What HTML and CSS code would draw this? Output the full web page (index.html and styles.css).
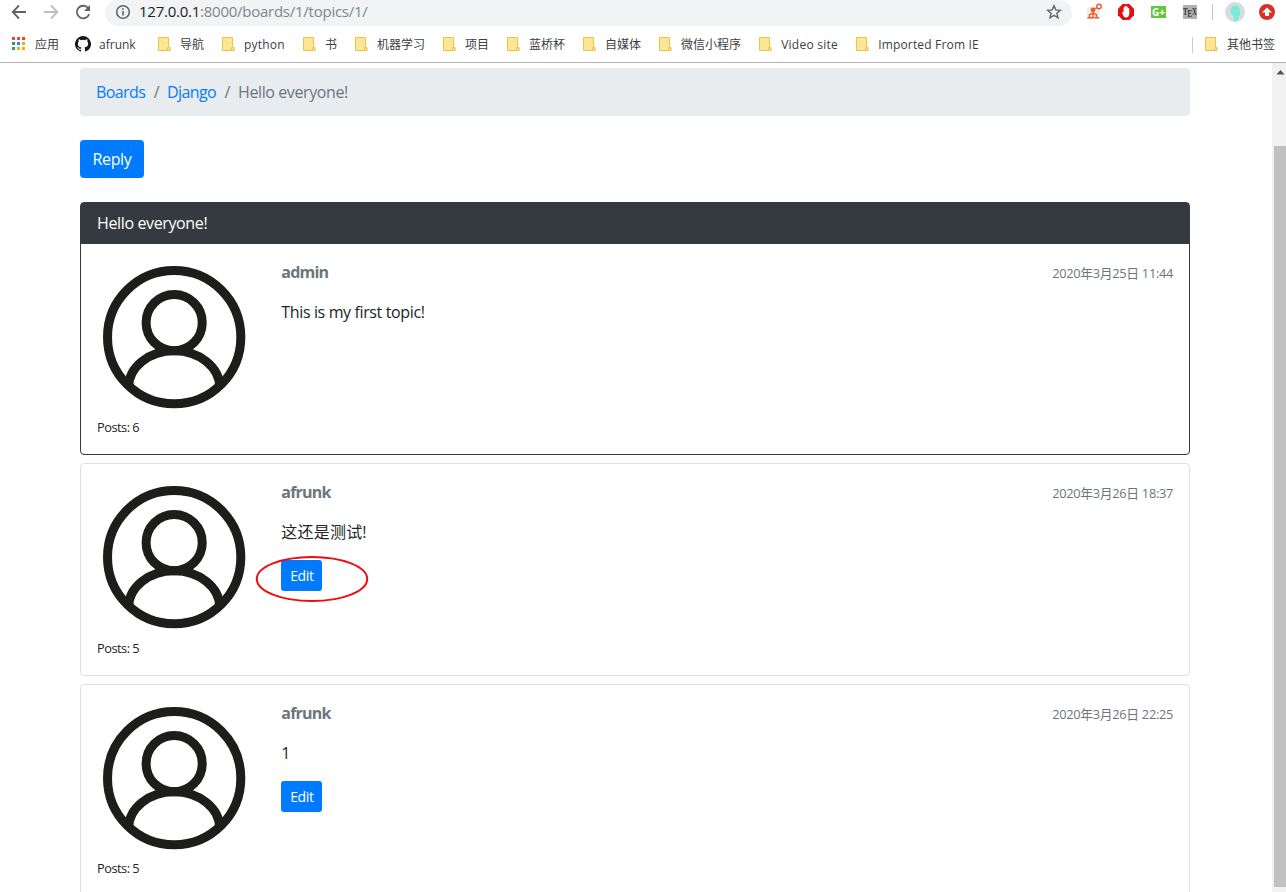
FILE: index.html
```html
<!DOCTYPE html>
<html lang="zh-CN">
<head>
<meta charset="utf-8">
<title>Hello everyone!</title>
<link rel="stylesheet" href="styles.css">
</head>
<body>
<svg class="defs" width="0" height="0">
  <symbol id="folder" viewBox="0 0 13 15">
    <path d="M.5.5h10v10h1.500v3h-11.500z" fill="#ffe694" stroke="#e8c44c"/>
    <path d="M9.500 13.500v-3q1.200-1.200 2.400 0v2q0 1-1 1z" fill="#ffe694" stroke="#e8c44c"/>
  </symbol>
  <symbol id="avatar" viewBox="0 0 154 154">
    <g fill="none" stroke="#1d1d1b" stroke-width="9">
      <circle cx="77" cy="77" r="66.500"/>
      <circle cx="77" cy="62.500" r="28"/>
      <path d="M31.500 127A45.500 36.500 0 0 1 122.500 127"/>
    </g>
  </symbol>
</svg>
<header class="browser">
  <div class="toolbar">
    <svg class="nav" width="100" height="26" viewBox="0 0 100 26" fill="none" stroke="#5f6368" stroke-width="1.800">
      <path d="M26 12H13.200M19 5.500L12.700 12l6.300 6.500"/>
      <path d="M44 12h12.800M51 5.500l6.300 6.500-6.300 6.500" stroke="#bcbec0"/>
      <path d="M88.200 8.200A6.300 6.300 0 1 0 89.200 14"/>
      <path d="M90 5v6h-6z" fill="#5f6368" stroke="none"/>
    </svg>
    <div class="omnibox">
      <svg width="16" height="16" viewBox="0 0 16 16" fill="none" stroke="#5f6368" stroke-width="1.600"><circle cx="8" cy="8" r="6.300"/><path d="M8 7v4.500M8 4.200v1.600"/></svg>
      <span class="url"><b>127.0.0.1</b>:8000/boards/1/topics/1/</span>
      <svg class="star" width="16" height="16" viewBox="0 0 16 16" fill="none" stroke="#5f6368" stroke-width="1.400"><path d="M8 1.700l1.800 4.200 4.600.4-3.500 3 1.100 4.500-4-2.400-4 2.400 1.100-4.500-3.500-3 4.600-.4z"/></svg>
    </div>
    <svg class="extensions" width="214" height="26" viewBox="1072 0 214 26">
      <rect x="1087" y="7" width="13" height="12" fill="#eeeeee"/>
      <g fill="none" stroke="#f4592f" stroke-width="1.400">
        <circle cx="1099" cy="6.500" r="2.300"/>
        <circle cx="1093" cy="10" r="1.700" fill="#f4592f"/>
        <path d="M1093 11v6M1089.500 17v-2.500q3.500-2 7 0V17M1087.500 17.700h4M1095 17.700h4M1091.500 17.700h3M1094.500 9l2.500-1.500"/>
      </g>
      <path d="M1122.700 4h6.600l4.700 4.700v6.600l-4.700 4.700h-6.600l-4.700-4.700V8.700z" fill="#e50d14"/>
      <path d="M1122 12l1.500.5V7.500q.8-1 1.300 0V6q.8-1 1.500 0v1q.8-1 1.500 0v1.500q.8-1 1.500 0V14q-.5 3.500-3.500 3.500-2.500 0-3.800-5.500" fill="#fff"/>
      <rect x="1151" y="6" width="15" height="12" fill="#60c93b"/>
      <text class="gplus" x="1152" y="15.500" textLength="13" lengthAdjust="spacingAndGlyphs">G+</text>
      <rect x="1183" y="5" width="14" height="14" fill="#b0b0b0"/>
      <text class="tex" x="1183" y="15" textLength="14" lengthAdjust="spacingAndGlyphs">T<tspan dy="1.500">E</tspan><tspan dy="-1.500">X</tspan></text>
      <path d="M1212.500 4v16" stroke="#c6c8ca"/>
      <circle cx="1235" cy="12" r="10" fill="#d9dcdd"/>
      <path d="M1230.500 11q0-5.500 4.700-5.500t4.800 5v3.500q0 2-1.500 2.500v3q-1 2-4 2l-1-1 .5-4.500q-3.500-1-3.500-5" fill="#79ebdc"/>
      <circle cx="1267" cy="12" r="8" fill="#d93025"/>
      <path d="M1267 7.500l5 5h-3v3.500h-4v-3.500h-3z" fill="#fff"/>
    </svg>
  </div>
  <nav class="bookmarks">
    <a class="apps"><svg width="13" height="13" viewBox="0 0 13 13"><path d="M0 0h3v3H0zM5 0h3v3H5zM10 0h3v3h-3z" fill="#ea4335"/><path d="M0 5h3v3H0zM0 10h3v3H0z" fill="#34a060"/><path d="M5 5h3v3H5z" fill="#2684fc"/><path d="M10 5h3v3h-3zM5 10h3v3H5zM10 10h3v3h-3z" fill="#fbab0b"/></svg><span>应用</span></a>
    <a class="github"><svg width="16" height="16" viewBox="0 0 16 16"><path d="M8 0a8 8 0 0 0-2.530 15.590c.4.070.55-.17.55-.38v-1.490c-2.230.49-2.690-.95-2.690-.95-.36-.92-.89-1.170-.89-1.170-.73-.5.050-.49.050-.49.810.06 1.230.83 1.230.83.710 1.230 1.870.87 2.330.67.070-.52.280-.87.500-1.070-1.770-.2-3.640-.89-3.640-3.950 0-.87.310-1.590.82-2.150-.08-.2-.36-1.010.08-2.120 0 0 .67-.21 2.200.82a7.600 7.600 0 0 1 4 0c1.530-1.030 2.200-.82 2.200-.82.44 1.110.16 1.920.08 2.120.51.560.82 1.280.82 2.150 0 3.070-1.870 3.750-3.650 3.950.29.250.54.730.54 1.480v2.190c0 .21.150.46.550.38A8 8 0 0 0 8 0z" fill="#191717"/></svg><span>afrunk</span></a>
    <a><svg width="13" height="15"><use href="#folder"/></svg><span>导航</span></a>
    <a><svg width="13" height="15"><use href="#folder"/></svg><span class="w-python">python</span></a>
    <a><svg width="13" height="15"><use href="#folder"/></svg><span>书</span></a>
    <a><svg width="13" height="15"><use href="#folder"/></svg><span>机器学习</span></a>
    <a><svg width="13" height="15"><use href="#folder"/></svg><span>项目</span></a>
    <a><svg width="13" height="15"><use href="#folder"/></svg><span>蓝桥杯</span></a>
    <a><svg width="13" height="15"><use href="#folder"/></svg><span>自媒体</span></a>
    <a><svg width="13" height="15"><use href="#folder"/></svg><span>微信小程序</span></a>
    <a><svg width="13" height="15"><use href="#folder"/></svg><span class="w-video">Video site</span></a>
    <a><svg width="13" height="15"><use href="#folder"/></svg><span class="w-import">Imported From IE</span></a>
    <a class="other"><svg width="13" height="15"><use href="#folder"/></svg><span>其他书签</span></a>
  </nav>
</header>
<div class="viewport">
  <main class="container">
    <ol class="breadcrumb"><li><a>Boards</a></li><li><a>Django</a></li><li class="active">Hello everyone!</li></ol>
    <a class="btn reply">Reply</a>
    <article class="card dark">
      <div class="card-header">Hello everyone!</div>
      <div class="card-body">
        <div class="profile"><svg class="avatar"><use href="#avatar"/></svg><small>Posts: 6</small></div>
        <div class="post">
          <div class="meta"><strong>admin</strong><small>2020年3月25日 11:44</small></div>
          <p>This is my first topic!</p>
        </div>
      </div>
    </article>
    <article class="card">
      <div class="card-body">
        <div class="profile"><svg class="avatar"><use href="#avatar"/></svg><small>Posts: 5</small></div>
        <div class="post">
          <div class="meta"><strong>afrunk</strong><small>2020年3月26日 18:37</small></div>
          <p class="cjk">这还是测试!</p>
          <div class="actions"><a class="btn small">Edit</a>
            <svg class="marker" width="114" height="48" viewBox="0 0 114 48"><ellipse cx="57" cy="24" rx="55.200" ry="22" fill="none" stroke="#f00b0b" stroke-width="2"/></svg>
          </div>
        </div>
      </div>
    </article>
    <article class="card">
      <div class="card-body">
        <div class="profile"><svg class="avatar"><use href="#avatar"/></svg><small>Posts: 5</small></div>
        <div class="post">
          <div class="meta"><strong>afrunk</strong><small>2020年3月26日 22:25</small></div>
          <p>1</p>
          <div class="actions"><a class="btn small">Edit</a></div>
        </div>
      </div>
    </article>
  </main>
  <div class="scrollbar">
    <svg width="14" height="17" viewBox="0 0 14 17"><path d="M4.500 11.500L8.500 7l4 4.500z" fill="#505050"/></svg>
    <div class="thumb"></div>
  </div>
</div>
</body>
</html>
```
FILE: styles.css
```css
* { box-sizing: border-box; }
body {
  margin: 0;
  height: 892px;
  overflow: hidden;
  display: flex;
  flex-direction: column;
  background: #fff;
  color: #212529;
  font: 16px/24px "Open Sans", "Noto Sans CJK SC", sans-serif;
  letter-spacing: -0.37px;
}
svg { display: block; flex: none; }
.defs { position: absolute; }
.browser { flex: none; height: 63px; border-bottom: 1px solid #b4b4b4; }
.toolbar { display: flex; height: 26px; }
.nav { margin-right: 5px; }
.omnibox {
  display: flex;
  align-items: center;
  width: 967px;
  height: 26px;
  padding: 0 10px 2px;
  background: #f1f3f4;
  border-radius: 13px;
}
.url { margin-left: 8px; padding-bottom: 2px; color: #80868b; font-size: 15px; letter-spacing: -0.25px; white-space: nowrap; }
.url b { color: #202124; font-weight: 400; }
.star { margin-left: auto; }
.gplus { font: 700 11px "Open Sans", sans-serif; fill: #fff; letter-spacing: 0; }
.tex { font: 700 11px "Liberation Serif", serif; fill: #333; letter-spacing: 0; }
.bookmarks {
  display: flex;
  align-items: center;
  gap: 18px;
  height: 36px;
  padding: 1px 11px 0 12px;
  color: #3c4043;
  font-size: 12px;
  letter-spacing: 0;
}
.bookmarks a { display: flex; align-items: center; gap: 9px; white-space: nowrap; line-height: 18px; }
.bookmarks .apps { gap: 10px; margin-right: -2px; }
.apps svg { margin-bottom: 2px; }
.bookmarks .github { gap: 8px; margin-right: 4px; }
.github svg { margin-bottom: 1px; }
.github span { width: 37px; }
.w-python { width: 41px; letter-spacing: 0.2px; }
.w-video { width: 57px; letter-spacing: 0.25px; }
.w-import { width: 101px; letter-spacing: 0.17px; }
.bookmarks .other { margin-left: auto; height: 16px; padding-left: 12px; border-left: 1px solid #ccc; }
.viewport { display: flex; flex: 1; min-height: 0; }
.container { flex: none; width: 1110px; margin-left: 80px; padding-top: 5px; }
.breadcrumb {
  display: flex;
  list-style: none;
  margin: 0 0 24px;
  padding: 12px 16px;
  background: #e9ecef;
  border-radius: 4px;
  color: #6c757d;
}
.breadcrumb li { letter-spacing: -0.6px; }
.breadcrumb .active { letter-spacing: -0.4px; }
.breadcrumb a { color: #007bff; }
.breadcrumb li + li::before { content: "/"; padding: 0 8px 0 8.5px; }
.btn { display: block; background: #007bff; color: #fff; border-radius: 4px; text-align: center; white-space: nowrap; }
.reply { width: 64px; height: 38px; line-height: 38px; margin-bottom: 24px; }
.card { margin-bottom: 8px; border: 1px solid #dfdfdf; border-radius: 4px; }
.dark { border-color: #343a40; }
.card-header { height: 41px; padding: 8px 16px; background: #343a40; color: #fff; }
.card-body { display: flex; gap: 30px; padding: 16px; }
.profile { width: 154.33px; }
.avatar { width: 154.33px; height: 154.33px; }
.profile small { display: block; height: 24px; letter-spacing: -0.5px; }
small { padding-top: 1px; font-size: 12.8px; letter-spacing: -0.3px; }
.post { flex: 1; }
.meta { display: flex; justify-content: space-between; height: 24px; margin-bottom: 16px; color: #6c757d; }
.meta strong { letter-spacing: -0.8px; }
.post p { margin: 0 0 16px; }
.post .cjk { letter-spacing: 0.2px; }
.actions { position: relative; width: 41px; }
.small { height: 31px; line-height: 31px; border-radius: 3px; font-size: 14px; }
.marker { position: absolute; left: -26px; top: -5px; }
.scrollbar { width: 14px; margin-left: auto; background: #f1f1f1; }
.thumb { height: 741px; margin: 66px 0 0 2px; background: #c1c1c1; }
```
